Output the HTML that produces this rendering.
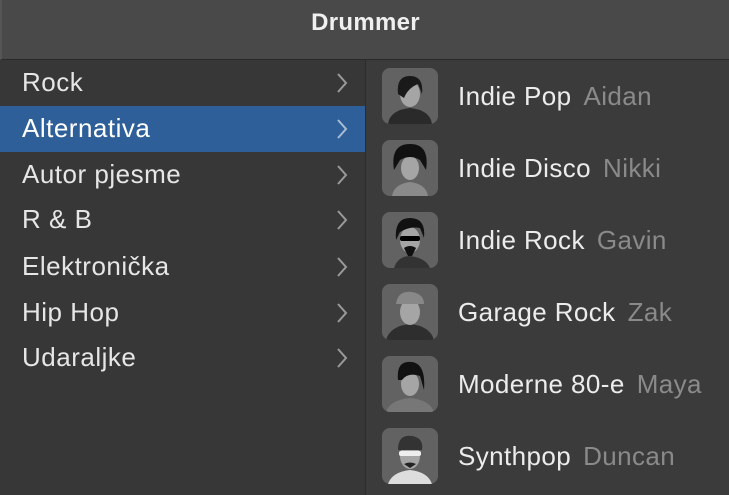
<!DOCTYPE html>
<html><head><meta charset="utf-8"><style>
*{margin:0;padding:0;box-sizing:border-box}
body{width:729px;height:495px;overflow:hidden;background:#3a3a3a;font-family:"Liberation Sans",sans-serif;position:relative}
.hdr{position:absolute;left:0;top:0;width:729px;height:60px;background:#494949;border-bottom:1px solid #2a2a2a;border-left:2px solid #555;color:#f0f0f0;font-size:24px;font-weight:bold;text-align:center;line-height:46px;letter-spacing:0.3px}
.left{position:absolute;left:0;top:60px;width:366px;height:435px;background:#373737;border-right:1px solid #2c2c2c}
.row{position:absolute;left:0;width:365px;height:46px;color:#e6e6e6;font-size:26px;letter-spacing:0.5px;line-height:45px;padding-left:22px}
.row.sel{background:#2e5f98;color:#fff}
.row svg{position:absolute;right:17px;top:12px}
.right{position:absolute;left:367px;top:60px;width:362px;height:435px;background:#3b3b3b}
.it{position:absolute;left:15px;height:56px;width:340px}
.av{position:absolute;left:0;top:0;width:56px;height:56px;border-radius:8px;background:#626262;overflow:hidden}
.t{position:absolute;left:76px;top:13px;font-size:26px;letter-spacing:0.4px;color:#ececec;white-space:nowrap}
.t span{color:#8a8a8a;margin-left:12px}
</style></head><body>
<div class="hdr">Drummer</div>
<div class="left">
<div class="row" style="top:0">Rock<svg width="12" height="22"><path d="M2 2 L10 11 L2 20" stroke="#9a9a9a" stroke-width="2" fill="none"/></svg></div>
<div class="row sel" style="top:46px">Alternativa<svg width="12" height="22"><path d="M2 2 L10 11 L2 20" stroke="#a8bcd6" stroke-width="2" fill="none"/></svg></div>
<div class="row" style="top:92px">Autor pjesme<svg width="12" height="22"><path d="M2 2 L10 11 L2 20" stroke="#9a9a9a" stroke-width="2" fill="none"/></svg></div>
<div class="row" style="top:137px">R &amp; B<svg width="12" height="22"><path d="M2 2 L10 11 L2 20" stroke="#9a9a9a" stroke-width="2" fill="none"/></svg></div>
<div class="row" style="top:184px">Elektronička<svg width="12" height="22"><path d="M2 2 L10 11 L2 20" stroke="#9a9a9a" stroke-width="2" fill="none"/></svg></div>
<div class="row" style="top:230px">Hip Hop<svg width="12" height="22"><path d="M2 2 L10 11 L2 20" stroke="#9a9a9a" stroke-width="2" fill="none"/></svg></div>
<div class="row" style="top:275px">Udaraljke<svg width="12" height="22"><path d="M2 2 L10 11 L2 20" stroke="#9a9a9a" stroke-width="2" fill="none"/></svg></div>
</div>
<div class="right">
<div class="it" style="top:8px"><div class="av"><svg width="56" height="56"><path d="M6 56 Q8 42 28 40 Q48 42 50 56Z" fill="#2a2a2a"/><ellipse cx="28" cy="26" rx="10" ry="13" fill="#a5a5a5"/><path d="M16 26 Q14 8 28 8 Q42 8 40 26 L36 16 Q26 20 22 30Z" fill="#1a1a1a"/></svg></div><div class="t">Indie Pop<span>Aidan</span></div></div>
<div class="it" style="top:80px"><div class="av"><svg width="56" height="56"><path d="M10 56 Q12 44 28 42 Q44 44 46 56Z" fill="#8a8a8a"/><ellipse cx="28" cy="28" rx="9" ry="12" fill="#a5a5a5"/><path d="M12 30 Q8 4 28 4 Q48 4 44 30 L38 20 Q28 14 18 20Z" fill="#111"/></svg></div><div class="t">Indie Disco<span>Nikki</span></div></div>
<div class="it" style="top:152px"><div class="av"><svg width="56" height="56"><path d="M12 56 Q16 44 28 44 Q44 46 48 56Z" fill="#333"/><ellipse cx="28" cy="28" rx="10" ry="13" fill="#a5a5a5"/><path d="M14 28 Q12 6 28 6 Q44 6 42 26 L38 16 Q28 14 18 20Z" fill="#111"/><rect x="18" y="24" width="20" height="5" rx="2" fill="#000"/><path d="M22 36 Q28 32 34 36 L30 44 L26 44Z" fill="#111"/></svg></div><div class="t">Indie Rock<span>Gavin</span></div></div>
<div class="it" style="top:224px"><div class="av"><svg width="56" height="56"><path d="M4 56 Q8 42 28 40 Q48 42 52 56Z" fill="#2e2e2e"/><ellipse cx="28" cy="28" rx="10" ry="13" fill="#a5a5a5"/><path d="M14 20 Q16 6 30 8 Q42 10 42 20Z" fill="#888"/></svg></div><div class="t">Garage Rock<span>Zak</span></div></div>
<div class="it" style="top:296px"><div class="av"><svg width="56" height="56"><path d="M4 56 Q8 44 28 42 Q48 44 52 56Z" fill="#777"/><ellipse cx="28" cy="28" rx="9" ry="12" fill="#a5a5a5"/><path d="M16 24 Q14 4 30 6 Q44 8 42 34 L38 20 Q26 16 20 24Z" fill="#111"/></svg></div><div class="t">Moderne 80-e<span>Maya</span></div></div>
<div class="it" style="top:368px"><div class="av"><svg width="56" height="56"><path d="M6 56 Q10 44 28 42 Q46 44 50 56Z" fill="#ddd"/><ellipse cx="28" cy="28" rx="10" ry="13" fill="#a5a5a5"/><path d="M16 22 Q16 6 30 8 Q42 10 40 22Z" fill="#333"/><rect x="17" y="23" width="22" height="5" rx="2" fill="#eee"/><path d="M22 36 Q28 33 34 36 L28 40Z" fill="#222"/></svg></div><div class="t">Synthpop<span>Duncan</span></div></div>
</div>
</body></html>
